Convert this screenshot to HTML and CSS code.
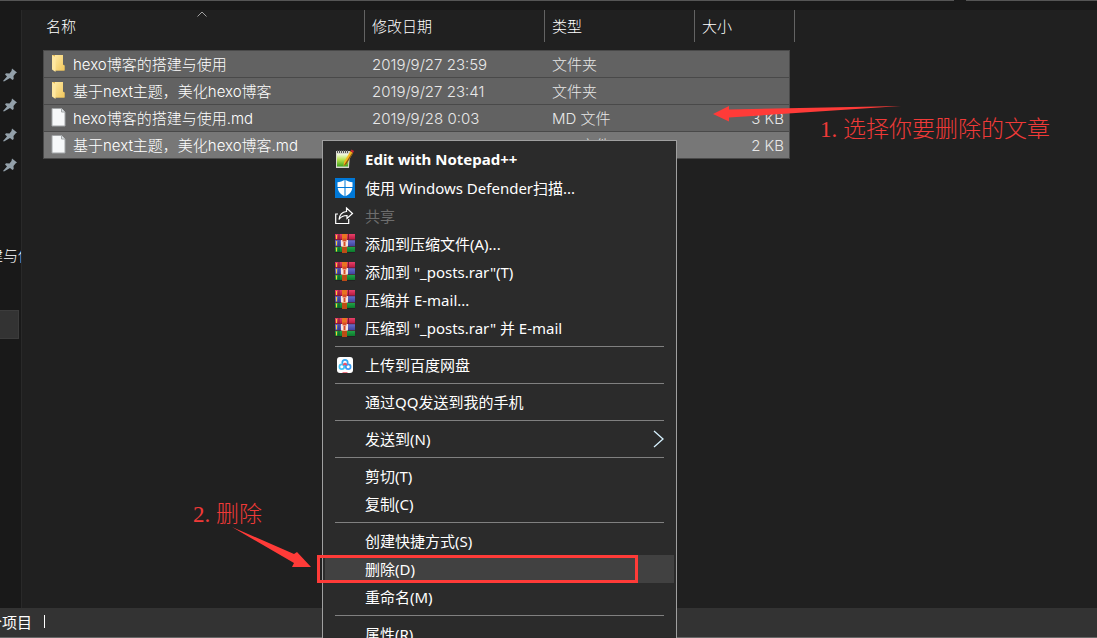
FILE: index.html
```html
<!DOCTYPE html>
<html lang="zh-CN">
<head>
<meta charset="utf-8">
<meta name="viewport" content="width=device-width, initial-scale=1">
<title>_posts</title>
<link rel="stylesheet" href="styles.css">
</head>
<body>
<svg class="defs" aria-hidden="true">
  <defs>
    <linearGradient id="gold" x1="0" x2="1" y1="0" y2="1"><stop offset="0" stop-color="#ffe9a2"/><stop offset="1" stop-color="#f0c65c"/></linearGradient>
    <linearGradient id="leaf" x1="0" x2="0" y1="0" y2="1"><stop offset="0" stop-color="#f4fae4"/><stop offset="0.45" stop-color="#b9e34f"/><stop offset="1" stop-color="#3fa31f"/></linearGradient>
    <linearGradient id="red" x1="0" x2="0" y1="0" y2="1"><stop offset="0" stop-color="#e8416a"/><stop offset="1" stop-color="#b3153c"/></linearGradient>
    <linearGradient id="blue" x1="0" x2="0" y1="0" y2="1"><stop offset="0" stop-color="#6a6fce"/><stop offset="1" stop-color="#3c409c"/></linearGradient>
    <linearGradient id="green" x1="0" x2="0" y1="0" y2="1"><stop offset="0" stop-color="#23a84a"/><stop offset="1" stop-color="#0c7a2c"/></linearGradient>
  </defs>
  <symbol id="pin" viewBox="0 0 14 14"><path fill="#93a0aa" d="M9 .5l5 4-1.500 1-2 2.500.200 3-1.200 1-2.500-2L1 13.500l-1-.500L4 8.500 2 6.500l1-1.300 3.500.300L8.500 3z"/></symbol>
  <symbol id="folder" viewBox="0 0 15 19"><path fill="#e3b751" d="M1 1h11v9.500l1.500 1v5H3z"/><path fill="url(#gold)" d="M4 1h8v10l1.500.500v5H4z"/><path fill="#ffe7a0" d="M1 1l3.500 2v15L1 15.500z"/></symbol>
  <symbol id="file" viewBox="0 0 15 19"><path fill="#f6f8f9" stroke="#a2a5a7" d="M1 .5h9.500l3.500 3.500v14H1z"/><path fill="#dce1e4" stroke="#a2a5a7" d="M10.500.500V4H14"/></symbol>
  <symbol id="rar" viewBox="0 0 20 20">
    <path fill="url(#red)" d="M0 0h20v6H0z"/><path fill="url(#blue)" d="M0 6h20v6.500H0z"/><path fill="url(#green)" d="M0 12.500h20V18H0z"/>
    <path fill="#222" d="M0 18h20v1H0z"/><path fill="#55203c" d="M0 5.500h20v.8H0zM0 12h20v.8H0z"/>
    <path fill="#f5cf36" d="M1 1h1v4H1zM1 7h1v4.500H1zM1 13.500h1v4H1z"/><path fill="#7d1931" d="M3.500 0h1v6h-1zM13 0h1v6h-1z"/><path fill="#2d3278" d="M3.500 6.500h1V12h-1z"/><path fill="#0b5821" d="M3.500 13h1v5h-1z"/>
    <path fill="#e87522" d="M7 0h5v19H7z"/><path fill="#bd4c16" d="M7 13h5v6H7z"/><path fill="#f5e6df" d="M6 6h7v6.500H6z"/><path fill="#d94d28" d="M7.500 4.500h4v3h-4zM8.500 8h2v4h-2z"/>
  </symbol>
</svg>

<div class="window">
  <div class="topbar"><span></span><span></span></div>
  <aside class="nav">
    <div class="pins">
      <svg><use href="#pin"/></svg><svg><use href="#pin"/></svg><svg><use href="#pin"/></svg><svg><use href="#pin"/></svg>
    </div>
    <div class="nav-label">建与使</div>
    <div class="nav-selected"></div>
  </aside>
  <main class="pane">
    <table class="files">
      <colgroup><col class="c-name"><col class="c-date"><col class="c-type"><col class="c-size"></colgroup>
      <thead>
        <tr>
          <th class="sorted">名称<svg class="sort" viewBox="0 0 10 6"><path d="M.5 5.500L5 1l4.500 4.500" fill="none" stroke="#a0a0a0"/></svg></th>
          <th>修改日期</th><th>类型</th><th class="last">大小</th>
        </tr>
      </thead>
      <tbody>
        <tr><td><span class="name"><svg class="folder"><use href="#folder"/></svg>hexo博客的搭建与使用</span></td><td>2019/9/27 23:59</td><td>文件夹</td><td></td></tr>
        <tr><td><span class="name"><svg class="folder"><use href="#folder"/></svg>基于next主题，美化hexo博客</span></td><td>2019/9/27 23:41</td><td>文件夹</td><td></td></tr>
        <tr><td><span class="name"><svg class="file"><use href="#file"/></svg>hexo博客的搭建与使用.md</span></td><td>2019/9/28 0:03</td><td>MD 文件</td><td class="size">3 KB</td></tr>
        <tr class="hover"><td><span class="name"><svg class="file"><use href="#file"/></svg>基于next主题，美化hexo博客.md</span></td><td></td><td>MD 文件</td><td class="size">2 KB</td></tr>
      </tbody>
    </table>
    <span class="column-end"></span>
  </main>
  <footer class="status"><span class="count">个项目</span><span class="divider"></span></footer>

  <div class="menu" role="menu">
    <button class="item default" role="menuitem"><svg class="icon" viewBox="0 0 20 20"><path fill="#d8d8ce" d="M1 2h14l-1 17H1z"/><path fill="url(#leaf)" d="M2 5h12l-1 12.500H2z"/><path d="M2 2.500h12" stroke="#555" stroke-width="3" stroke-dasharray="1 1"/><path fill="#f6b51d" d="M15.500 2l2.500 2-6.500 11-3 2 .5-4z"/><path fill="#855214" d="M17 4l1 0-6.500 11-3 2z"/><path fill="#c92531" d="M16.500.500l2.500 1.500-1 2-2.500-2z"/></svg>Edit with Notepad++</button>
    <button class="item" role="menuitem"><svg class="icon" viewBox="0 0 20 20"><path fill="#0078d7" d="M0 0h20v20H0z"/><path fill="#fff" d="M9.500 2C7.500 3.300 5 4 2.500 4.200V9h7zM10.500 2V9h7V4.200C15 4 12.500 3.300 10.500 2zM2.700 10c.6 4 3 6.500 6.800 8.300V10zM10.500 18.300c3.800-1.800 6.200-4.300 6.800-8.300h-6.800z"/></svg>使用 Windows Defender扫描...</button>
    <button class="item" role="menuitem" disabled><svg class="icon" viewBox="0 0 20 20" fill="none" stroke="#fff" stroke-width="1.200"><path d="M3 8H.7v9.500h13V13"/><path d="M11.500 2l6 5.500-5.500 5V9.500c-4 0-6 1-8 4 .5-5 3-7.500 7.500-8z"/></svg>共享</button>
    <button class="item" role="menuitem"><svg class="icon"><use href="#rar"/></svg>添加到压缩文件(A)...</button>
    <button class="item" role="menuitem"><svg class="icon"><use href="#rar"/></svg>添加到 "_posts.rar"(T)</button>
    <button class="item" role="menuitem"><svg class="icon"><use href="#rar"/></svg>压缩并 E-mail...</button>
    <button class="item" role="menuitem"><svg class="icon"><use href="#rar"/></svg>压缩到 "_posts.rar" 并 E-mail</button>
    <hr>
    <button class="item" role="menuitem"><svg class="icon" viewBox="0 0 20 20"><rect x="2" y="2" width="16" height="16" rx="3" fill="#fff"/><g fill="none" stroke-width="1.700"><circle cx="10" cy="7.500" r="2.700" stroke="#35a7f2"/><circle cx="6.800" cy="11.800" r="2.400" stroke="#43c5f5"/><circle cx="13.200" cy="11.800" r="2.400" stroke="#3a9cf4"/><path d="M8 10l2-1.500 2 1.500" stroke="#ee5368"/></g><path d="M7.500 17.500h5" stroke="#ee7886"/></svg>上传到百度网盘</button>
    <hr>
    <button class="item" role="menuitem"><span class="icon"></span>通过QQ发送到我的手机</button>
    <hr>
    <button class="item" role="menuitem"><span class="icon"></span>发送到(N)<svg class="chevron" viewBox="0 0 11 18"><path d="M1 1l9 8-9 8" fill="none" stroke="#d7f2ff" stroke-width="1.300"/></svg></button>
    <hr>
    <button class="item" role="menuitem"><span class="icon"></span>剪切(T)</button>
    <button class="item" role="menuitem"><span class="icon"></span>复制(C)</button>
    <hr>
    <button class="item" role="menuitem"><span class="icon"></span>创建快捷方式(S)</button>
    <button class="item active" role="menuitem"><span class="icon"></span>删除(D)</button>
    <button class="item" role="menuitem"><span class="icon"></span>重命名(M)</button>
    <hr>
    <button class="item" role="menuitem"><span class="icon"></span>属性(R)</button>
  </div>

  <svg class="arrow arrow-select" viewBox="0 0 190 18"><path fill="#ff3b38" d="M0 9L16 1v3.500L188 1 16 12.500v4z"/></svg>
  <p class="note note-select">1. 选择你要删除的文章</p>
  <p class="note note-delete">2. 删除</p>
  <svg class="arrow arrow-delete" viewBox="0 0 80 42"><path fill="#ff3b38" d="M0 0L62 27 65 25l14 15H60l2-4z"/></svg>
  <div class="frame"></div>
</div>
</body>
</html>
```

FILE: styles.css
```css
* { box-sizing: border-box; }

body {
  margin: 0;
  background: #202020;
  color: #fff;
  font: 15px/20px "Noto Sans", "Noto Sans CJK SC", sans-serif;
}

.defs { position: absolute; width: 0; height: 0; }

.window {
  position: relative;
  display: grid;
  grid-template: 10px 1fr 30px / 22px 1fr;
  height: 100vh;
  overflow: hidden;
}

.topbar {
  grid-column: 1 / -1;
  display: flex;
  gap: 12px;
  background: #191919;
}
.topbar span { height: 1px; background: #555; flex: 131; }
.topbar span:first-child { flex: 954; }

.nav {
  background: #191919;
  border-right: 1px solid #292929;
  overflow: hidden;
}
.pins {
  display: grid;
  gap: 16px;
  padding: 58px 0 0 3px;
}
.pins svg { display: block; width: 14px; height: 14px; }
.nav-label {
  margin: 73px 0 0 -12px;
  font-weight: 300;
  white-space: nowrap;
}
.nav-selected {
  width: 19px;
  height: 29px;
  margin-top: 45px;
  background: #333;
  border: 1px solid #3c3c3c;
  border-left: 0;
}

.pane {
  display: flex;
  align-items: flex-start;
  gap: 4px;
  padding-left: 21px;
  overflow: hidden;
}
.column-end { width: 1px; height: 32px; background: #636363; }

.files {
  width: 747px;
  table-layout: fixed;
  border-collapse: separate;
  border-spacing: 0;
  font-family: Inter, "Noto Sans CJK SC", sans-serif;
  font-weight: 300;
}
.c-name { width: 322px; }
.c-date { width: 180px; }
.c-type { width: 150px; }
.c-size { width: 95px; }

.files th {
  height: 40px;
  padding: 0 0 6px 7px;
  text-align: left;
  font-weight: 300;
  background: linear-gradient(#636363, #636363) top right / 1px 32px no-repeat;
}
.files th:first-child { padding-left: 3px; }
.files th.last { background: none; }
.sorted { position: relative; }
.sort { position: absolute; top: 1px; left: 154px; width: 10px; height: 6px; }

.files td {
  height: 27px;
  padding: 2px 0 0 7px;
  border-top: 1px solid #494949;
  background: #626262;
  color: #e8e8e8;
}
.files td:first-child { padding-top: 0; border-left: 1px solid #494949; color: #fff; }
.files td:last-child { border-right: 1px solid #494949; }
.files .hover td { height: 28px; background: #777; border-bottom: 1px solid #494949; }
.files td.size { padding: 2px 5px 0 0; text-align: right; }
.name { display: flex; align-items: center; gap: 7px; height: 26px; padding-top: 2px; }
.name svg { width: 15px; height: 19px; margin-bottom: 4px; }

.status {
  grid-column: 1 / -1;
  display: flex;
  align-items: center;
  gap: 12px;
  padding-bottom: 2px;
  background: #333;
  border-bottom: 1px solid #686868;
}
.count { margin-left: -13px; }
.divider { width: 1px; height: 13px; background: #fff; }

.menu {
  position: absolute;
  top: 140px;
  left: 322px;
  width: 355px;
  padding: 5px 2px;
  background: #2b2b2b;
  border: 1px solid #a0a0a0;
}
.item {
  display: flex;
  align-items: center;
  gap: 10px;
  width: 100%;
  height: 28px;
  padding: 0 10px;
  border: 0;
  background: none;
  color: #fff;
  font: inherit;
  text-align: left;
  white-space: nowrap;
}
.item:disabled { color: #6d6d6d; }
.default { font-weight: 700; padding-bottom: 2px; }
.active { background: #414141; }
.icon { flex: none; width: 20px; height: 20px; }
.chevron { width: 11px; height: 18px; margin-left: auto; }
.menu hr { height: 1px; margin: 4px 10px; border: 0; background: #808080; }

.note {
  position: absolute;
  margin: 0;
  color: #f03a38;
  font: 300 23px/28px "Liberation Serif", "Noto Sans CJK SC", serif;
  white-space: nowrap;
}
.note-select { top: 116px; left: 820px; }
.note-delete { top: 501px; left: 193px; }
.arrow { position: absolute; }
.arrow-select { top: 105px; left: 713px; width: 190px; height: 18px; }
.arrow-delete { top: 527px; left: 232px; width: 80px; height: 42px; }
.frame {
  position: absolute;
  top: 555px;
  left: 317px;
  width: 321px;
  height: 28px;
  border: 3px solid #ff3b38;
}
```
